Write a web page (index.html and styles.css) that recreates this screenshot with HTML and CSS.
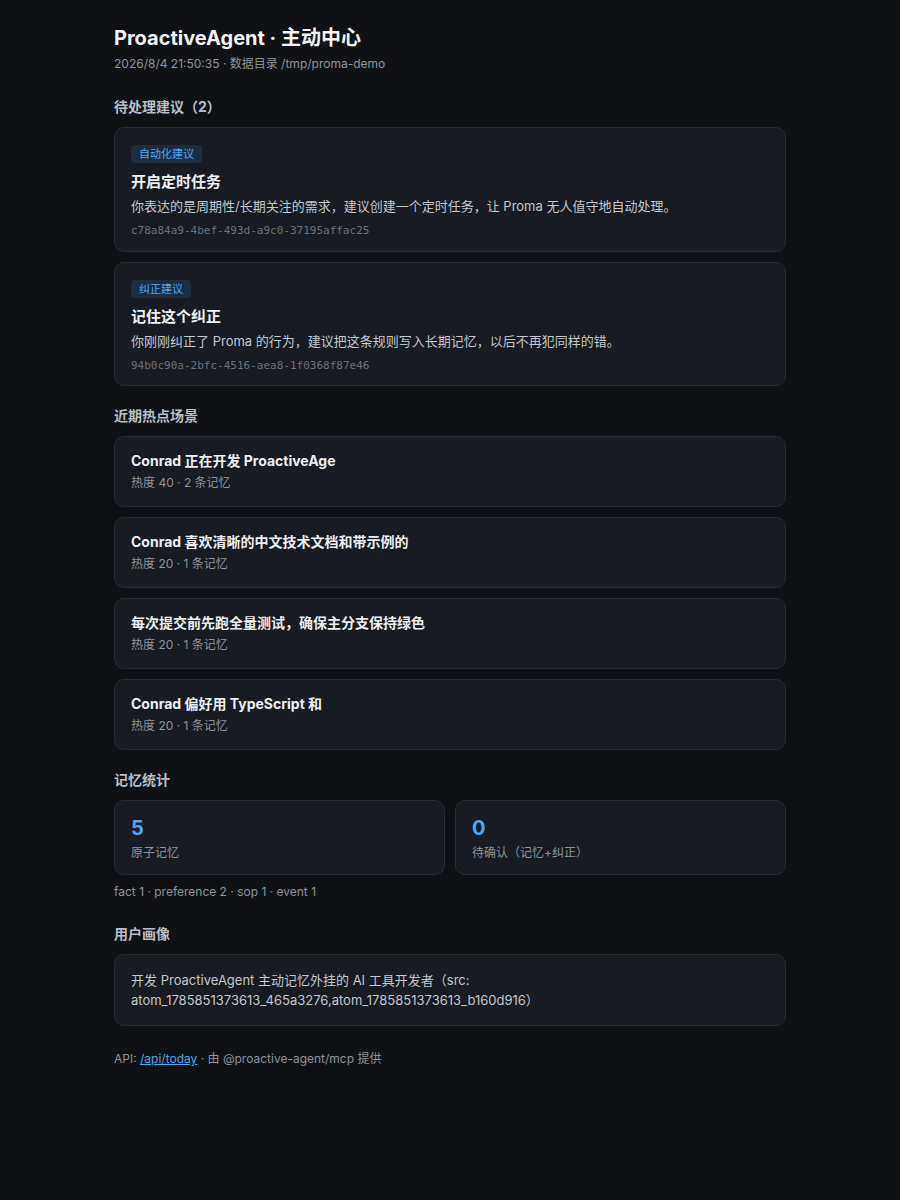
FILE: index.html
```html
<!DOCTYPE html>
<html lang="zh-CN">
<head>
<meta charset="utf-8">
<title>ProactiveAgent · 主动中心</title>
<link rel="stylesheet" href="styles.css">
</head>
<body>
<main class="page">
  <h1 class="title">ProactiveAgent · 主动中心</h1>
  <div class="subtitle">2026/8/4 21:50:35 · 数据目录 /tmp/proma-demo</div>

  <h2 class="section first">待处理建议（2）</h2>
  <div class="list">
    <div class="card suggestion">
      <span class="badge">自动化建议</span>
      <div class="s-title">开启定时任务</div>
      <div class="s-desc">你表达的是周期性/长期关注的需求，建议创建一个定时任务，让 Proma 无人值守地自动处理。</div>
      <div class="s-id">c78a84a9-4bef-493d-a9c0-37195affac25</div>
    </div>
    <div class="card suggestion">
      <span class="badge">纠正建议</span>
      <div class="s-title">记住这个纠正</div>
      <div class="s-desc">你刚刚纠正了 Proma 的行为，建议把这条规则写入长期记忆，以后不再犯同样的错。</div>
      <div class="s-id">94b0c90a-2bfc-4516-aea8-1f0368f87e46</div>
    </div>
  </div>

  <h2 class="section">近期热点场景</h2>
  <div class="list">
    <div class="card hot">
      <div class="h-title">Conrad 正在开发 ProactiveAge</div>
      <div class="meta">热度 40 · 2 条记忆</div>
    </div>
    <div class="card hot">
      <div class="h-title">Conrad 喜欢清晰的中文技术文档和带示例的</div>
      <div class="meta">热度 20 · 1 条记忆</div>
    </div>
    <div class="card hot">
      <div class="h-title">每次提交前先跑全量测试，确保主分支保持绿色</div>
      <div class="meta">热度 20 · 1 条记忆</div>
    </div>
    <div class="card hot">
      <div class="h-title">Conrad 偏好用 TypeScript 和</div>
      <div class="meta">热度 20 · 1 条记忆</div>
    </div>
  </div>

  <h2 class="section">记忆统计</h2>
  <div class="stats">
    <div class="card stat">
      <div class="num">5</div>
      <div class="meta">原子记忆</div>
    </div>
    <div class="card stat">
      <div class="num">0</div>
      <div class="meta">待确认（记忆+纠正）</div>
    </div>
  </div>
  <div class="types meta">fact 1 · preference 2 · sop 1 · event 1</div>

  <h2 class="section after-text">用户画像</h2>
  <div class="card profile">开发 ProactiveAgent 主动记忆外挂的 AI 工具开发者（src: atom_1785851373613_465a3276,atom_1785851373613_b160d916）</div>

  <footer class="footer">API: <a href="#" class="link">/api/today</a> · 由 @proactive-agent/mcp 提供</footer>
</main>
</body>
</html>
```

FILE: styles.css
```css
html, body {
  margin: 0;
  padding: 0;
  background: #0f1115;
}
body {
  font-family: Inter, "Noto Sans CJK SC", "Noto Sans", sans-serif;
  color: #e6e8eb;
}
.page {
  width: 672px;
  margin: 0 auto;
  padding: 24px 0 40px;
}
.title {
  margin: 0;
  font-size: 20px;
  line-height: 28px;
  font-weight: 700;
  color: #f3f4f6;
}
.subtitle {
  margin-top: 3px;
  font-size: 12px;
  line-height: 18px;
  color: #8d939c;
}
.section {
  margin: 20px 0 10px;
  font-size: 14px;
  line-height: 20px;
  font-weight: 700;
  color: #b9bec6;
}
.section.first { margin-top: 24px; }
.section.after-text { margin-top: 23px; }
.list {
  display: flex;
  flex-direction: column;
  gap: 10px;
}
.card {
  background: #181b22;
  border: 1px solid #272b34;
  border-radius: 10px;
}
.suggestion {
  padding: 17px 16px 11.5px;
}
.badge {
  display: inline-block;
  padding: 0 8px;
  height: 18px;
  line-height: 18px;
  font-size: 11px;
  border-radius: 4px;
  background: #1b2d3f;
  color: #4ea6f2;
  vertical-align: top;
}
.s-title {
  margin-top: 6px;
  font-size: 15px;
  line-height: 22px;
  font-weight: 700;
  color: #f0f1f3;
}
.s-desc {
  margin-top: 3px;
  font-size: 13px;
  line-height: 20px;
  color: #c2c6cd;
}
.s-id {
  margin-top: 7px;
  font-family: "DejaVu Sans Mono", "Liberation Mono", monospace;
  font-size: 11px;
  line-height: 16px;
  color: #6b717b;
}
.hot {
  padding: 14px 16px 14px;
}
.h-title {
  font-size: 14px;
  line-height: 20px;
  font-weight: 700;
  color: #eceef1;
}
.meta {
  font-size: 12px;
  line-height: 18px;
  color: #8d939c;
}
.hot .meta { margin-top: 3px; }
.stat {
  padding: 13px 16px 12px;
}
.stats {
  display: grid;
  grid-template-columns: 1fr 1fr;
  gap: 10px;
}
.num {
  font-size: 20px;
  line-height: 28px;
  font-weight: 700;
  color: #4ea6f2;
}
.stat .meta { margin-top: 2px; }
.types {
  margin-top: 8px;
}
.profile {
  padding: 15px 16px 15px;
  font-size: 13px;
  line-height: 20px;
  color: #c2c6cd;
}
.footer {
  margin-top: 24px;
  font-size: 12px;
  line-height: 18px;
  color: #8d939c;
}
.link {
  color: #4ea6f2;
  text-decoration: underline;
}
```
